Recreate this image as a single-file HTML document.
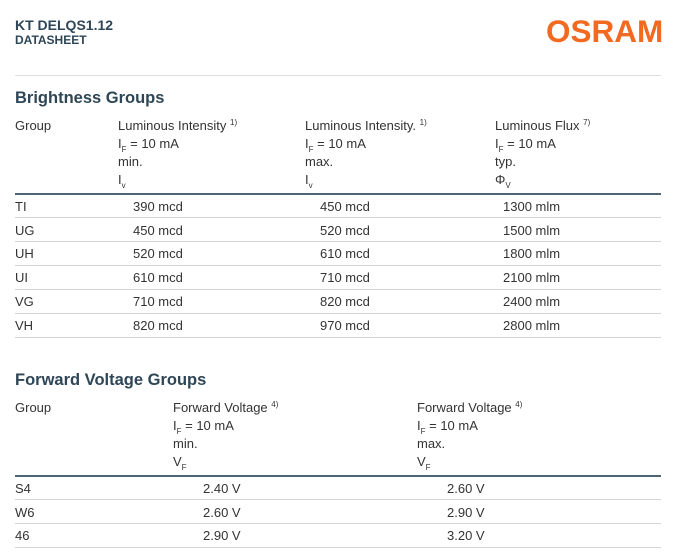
<!DOCTYPE html>
<html><head><meta charset="utf-8"><style>
body{margin:0;width:688px;height:560px;background:#fff;font-family:"Liberation Sans",sans-serif;color:#333;position:relative;overflow:hidden}
.a{position:absolute;white-space:nowrap;font-size:13px;line-height:15px}
.h{position:absolute;font-weight:bold;color:#2e4656}
.l{position:absolute;left:15px;width:646px;height:1px;background:#d2d4d6}
.t{position:absolute;left:15px;width:646px;height:2px;background:#4e6574}
sub{font-size:8px;position:relative;top:4px;vertical-align:baseline;line-height:0}
sup{font-size:8px;position:relative;top:-5px;vertical-align:baseline;line-height:0}
.r{line-height:23.7px}
</style></head><body>
<div class="h" style="left:15px;top:17px;font-size:14px">KT DELQS1.12</div>
<div class="h" style="left:15px;top:33px;font-size:12px">DATASHEET</div>
<div style="position:absolute;left:546px;top:15px;font-size:31.5px;line-height:32px;font-weight:bold;color:#f26a21">OSRAM</div>
<div class="l" style="top:75px;background:#dde1e3"></div>

<div class="h" style="left:15px;top:89px;font-size:16.5px">Brightness Groups</div>
<div class="a" style="left:15px;top:118px">Group</div>
<div class="a" style="left:118px;top:118px">Luminous Intensity <sup>1)</sup></div>
<div class="a" style="left:118px;top:136px">I<sub>F</sub> = 10 mA</div>
<div class="a" style="left:118px;top:154px">min.</div>
<div class="a" style="left:118px;top:172px">I<sub>v</sub></div>
<div class="a" style="left:305px;top:118px">Luminous Intensity. <sup>1)</sup></div>
<div class="a" style="left:305px;top:136px">I<sub>F</sub> = 10 mA</div>
<div class="a" style="left:305px;top:154px">max.</div>
<div class="a" style="left:305px;top:172px">I<sub>v</sub></div>
<div class="a" style="left:495px;top:118px">Luminous Flux <sup>7)</sup></div>
<div class="a" style="left:495px;top:136px">I<sub>F</sub> = 10 mA</div>
<div class="a" style="left:495px;top:154px">typ.</div>
<div class="a" style="left:495px;top:172px">Φ<sub>V</sub></div>
<div class="t" style="top:193px"></div>
<div class="a r" style="left:15px;top:195px">TI<br>UG<br>UH<br>UI<br>VG<br>VH</div>
<div class="a r" style="left:133px;top:195px">390 mcd<br>450 mcd<br>520 mcd<br>610 mcd<br>710 mcd<br>820 mcd</div>
<div class="a r" style="left:320px;top:195px">450 mcd<br>520 mcd<br>610 mcd<br>710 mcd<br>820 mcd<br>970 mcd</div>
<div class="a r" style="left:503px;top:195px">1300 mlm<br>1500 mlm<br>1800 mlm<br>2100 mlm<br>2400 mlm<br>2800 mlm</div>
<div class="l" style="top:217px"></div>
<div class="l" style="top:241px"></div>
<div class="l" style="top:265px"></div>
<div class="l" style="top:289px"></div>
<div class="l" style="top:313px"></div>
<div class="l" style="top:337px"></div>

<div class="h" style="left:15px;top:371px;font-size:16.5px">Forward Voltage Groups</div>
<div class="a" style="left:15px;top:400px">Group</div>
<div class="a" style="left:173px;top:400px">Forward Voltage <sup>4)</sup></div>
<div class="a" style="left:173px;top:418px">I<sub>F</sub> = 10 mA</div>
<div class="a" style="left:173px;top:436px">min.</div>
<div class="a" style="left:173px;top:454px">V<sub>F</sub></div>
<div class="a" style="left:417px;top:400px">Forward Voltage <sup>4)</sup></div>
<div class="a" style="left:417px;top:418px">I<sub>F</sub> = 10 mA</div>
<div class="a" style="left:417px;top:436px">max.</div>
<div class="a" style="left:417px;top:454px">V<sub>F</sub></div>
<div class="t" style="top:475px"></div>
<div class="a r" style="left:15px;top:477px">S4<br>W6<br>46</div>
<div class="a r" style="left:203px;top:477px">2.40 V<br>2.60 V<br>2.90 V</div>
<div class="a r" style="left:447px;top:477px">2.60 V<br>2.90 V<br>3.20 V</div>
<div class="l" style="top:499px"></div>
<div class="l" style="top:523px"></div>
<div class="l" style="top:547px"></div>
</body></html>
